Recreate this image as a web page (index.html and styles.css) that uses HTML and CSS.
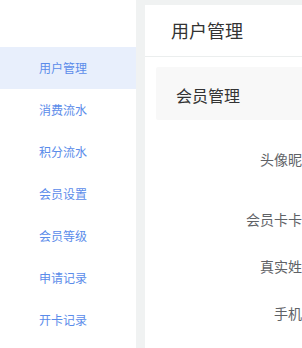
FILE: index.html
```html
<!DOCTYPE html>
<html lang="zh-CN">
<head>
  <meta charset="UTF-8">
  <title>用户管理</title>
  <link rel="stylesheet" href="styles.css">
</head>
<body>
  <div class="layout">
    <div class="sidebar">
      <ul class="menu">
        <li class="active">用户管理</li>
        <li>消费流水</li>
        <li>积分流水</li>
        <li>会员设置</li>
        <li>会员等级</li>
        <li>申请记录</li>
        <li>开卡记录</li>
      </ul>
    </div>

    <div class="main">
      <div class="card">
        <div class="card-header">用户管理</div>
        <div class="card-body">
          <div class="section-title">会员管理</div>

          <div class="form">
            <div class="form-item tall">
              <label>头像昵称</label>
            </div>
            <div class="form-item">
              <label>会员卡卡号</label>
            </div>
            <div class="form-item">
              <label>真实姓名</label>
            </div>
            <div class="form-item">
              <label>手机号</label>
            </div>
          </div>
        </div>
      </div>
    </div>
  </div>
</body>
</html>
```

FILE: styles.css
```css
html, body {
  margin: 0;
  padding: 0;
  overflow: hidden;
}

body {
  font-family: "Noto Sans CJK SC", "Noto Sans", sans-serif;
  background: #f0f2f2;
}

.layout {
  display: flex;
  width: 1200px;
  min-height: 100vh;
}

.sidebar {
  width: 136px;
  flex-shrink: 0;
  background: #fff;
}

.menu {
  list-style: none;
  margin: 0;
  padding: 47px 0 0 0;
}

.menu li {
  height: 42px;
  line-height: 42px;
  padding-left: 39px;
  font-size: 12px;
  color: #5b8cea;
}

.menu li.active {
  background: #e8effc;
}

.main {
  flex: 1;
  display: flex;
  padding: 5px 0 0 9px;
}

.card {
  flex: 1;
  background: #fff;
}

.card-header {
  height: 51px;
  line-height: 51px;
  padding-left: 26px;
  font-size: 18px;
  color: #333;
  border-bottom: 1px solid #ebeeee;
}

.card-body {
  padding: 10px 11px;
}

.section-title {
  height: 53px;
  line-height: 56px;
  padding-left: 20px;
  font-size: 16px;
  color: #333;
  background: #f8f8f8;
  border-radius: 2px;
}

.form {
  padding: 23px 0 0 40px;
}

.form-item {
  display: flex;
  height: 32px;
  margin-bottom: 15px;
}

.form-item.tall {
  height: 45px;
}

.form-item label {
  width: 120px;
  line-height: 32px;
  text-align: right;
  font-size: 14px;
  color: #606266;
}
```
